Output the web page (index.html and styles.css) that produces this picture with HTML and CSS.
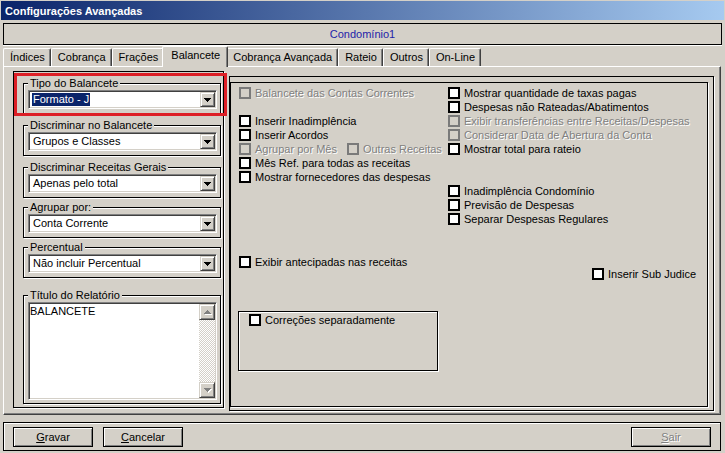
FILE: index.html
```html
<!DOCTYPE html>
<html lang="pt-BR">
<head>
<meta charset="utf-8">
<title>Configurações Avançadas</title>
<link rel="stylesheet" href="styles.css">
</head>
<body>
<div class="window">
  <div class="titlebar">Configurações Avançadas</div>
  <div class="condo">Condomínio1</div>
  <div class="tabs">
    <div class="tab">Índices</div>
    <div class="tab">Cobrança</div>
    <div class="tab">Frações</div>
    <div class="tab active">Balancete</div>
    <div class="tab">Cobrança Avançada</div>
    <div class="tab">Rateio</div>
    <div class="tab">Outros</div>
    <div class="tab">On-Line</div>
  </div>
  <div class="tabpanel">
    <div class="leftframe">
      <fieldset class="grp g1">
        <legend>Tipo do Balancete</legend>
        <div class="combo"><span class="val"><span class="sel">Formato - J</span></span><span class="drop"><svg width="7" height="4" viewBox="0 0 7 4"><path d="M0 0h7v1H0zM1 1h5v1H1zM2 2h3v1H2zM3 3h1v1H3z"/></svg></span></div>
      </fieldset>
      <fieldset class="grp g2">
        <legend>Discriminar no Balancete</legend>
        <div class="combo"><span class="val">Grupos e Classes</span><span class="drop"><svg width="7" height="4" viewBox="0 0 7 4"><path d="M0 0h7v1H0zM1 1h5v1H1zM2 2h3v1H2zM3 3h1v1H3z"/></svg></span></div>
      </fieldset>
      <fieldset class="grp g3">
        <legend>Discriminar Receitas Gerais</legend>
        <div class="combo"><span class="val">Apenas pelo total</span><span class="drop"><svg width="7" height="4" viewBox="0 0 7 4"><path d="M0 0h7v1H0zM1 1h5v1H1zM2 2h3v1H2zM3 3h1v1H3z"/></svg></span></div>
      </fieldset>
      <fieldset class="grp g4">
        <legend>Agrupar por:</legend>
        <div class="combo"><span class="val">Conta Corrente</span><span class="drop"><svg width="7" height="4" viewBox="0 0 7 4"><path d="M0 0h7v1H0zM1 1h5v1H1zM2 2h3v1H2zM3 3h1v1H3z"/></svg></span></div>
      </fieldset>
      <fieldset class="grp g5">
        <legend>Percentual</legend>
        <div class="combo"><span class="val">Não incluir Percentual</span><span class="drop"><svg width="7" height="4" viewBox="0 0 7 4"><path d="M0 0h7v1H0zM1 1h5v1H1zM2 2h3v1H2zM3 3h1v1H3z"/></svg></span></div>
      </fieldset>
      <fieldset class="grp g6">
        <legend>Título do Relatório</legend>
        <div class="memo">
          <div class="memotext">BALANCETE</div>
          <div class="vscroll">
            <span class="sbtn"><svg class="darr" width="7" height="4" viewBox="0 0 7 4"><path d="M3 0h1v1H3zM2 1h3v1H2zM1 2h5v1H1zM0 3h7v1H0z"/></svg></span>
            <span class="strack"></span>
            <span class="sbtn"><svg class="darr" width="7" height="4" viewBox="0 0 7 4"><path d="M0 0h7v1H0zM1 1h5v1H1zM2 2h3v1H2zM3 3h1v1H3z"/></svg></span>
          </div>
        </div>
      </fieldset>
    </div>
    <div class="rframe">
      <div class="rpanel">
        <div class="cols">
          <div class="col colA">
            <div class="row dis"><span class="box"></span><span class="lbl">Balancete das Contas Correntes</span></div>
            <div class="blank"></div>
            <div class="row"><span class="box"></span><span class="lbl">Inserir Inadimplência</span></div>
            <div class="row"><span class="box"></span><span class="lbl">Inserir Acordos</span></div>
            <div class="row dis"><span class="box"></span><span class="lbl">Agrupar por Mês</span><span class="box second"></span><span class="lbl">Outras Receitas</span></div>
            <div class="row"><span class="box"></span><span class="lbl">Mês Ref. para todas as receitas</span></div>
            <div class="row"><span class="box"></span><span class="lbl">Mostrar fornecedores das despesas</span></div>
          </div>
          <div class="col colB">
            <div class="row"><span class="box"></span><span class="lbl">Mostrar quantidade de taxas pagas</span></div>
            <div class="row"><span class="box"></span><span class="lbl">Despesas não Rateadas/Abatimentos</span></div>
            <div class="row dis"><span class="box"></span><span class="lbl">Exibir transferências entre Receitas/Despesas</span></div>
            <div class="row dis"><span class="box"></span><span class="lbl">Considerar Data de Abertura da Conta</span></div>
            <div class="row"><span class="box"></span><span class="lbl">Mostrar total para rateio</span></div>
            <div class="blank"></div>
            <div class="blank"></div>
            <div class="row"><span class="box"></span><span class="lbl">Inadimplência Condomínio</span></div>
            <div class="row"><span class="box"></span><span class="lbl">Previsão de Despesas</span></div>
            <div class="row"><span class="box"></span><span class="lbl">Separar Despesas Regulares</span></div>
          </div>
        </div>
        <div class="midrow">
          <div class="row"><span class="box"></span><span class="lbl">Exibir antecipadas nas receitas</span></div>
          <div class="row subjudice"><span class="box"></span><span class="lbl">Inserir Sub Judice</span></div>
        </div>
        <div class="correcoes">
          <div class="row"><span class="box"></span><span class="lbl">Correções separadamente</span></div>
        </div>
      </div>
    </div>
  </div>
  <div class="buttonbar">
    <div class="btn"><u>G</u>ravar</div>
    <div class="btn"><u>C</u>ancelar</div>
    <div class="btn disabled"><u>S</u>air</div>
  </div>
</div>
<div class="redmark"></div>
</body>
</html>
```
FILE: styles.css
```css
* { box-sizing: border-box; }
html, body { margin: 0; padding: 0; }
body {
  width: 725px;
  height: 453px;
  background: #d4d0c8;
  font-family: "Liberation Sans", Arial, sans-serif;
  font-size: 11px;
  color: #000;
  overflow: hidden;
  position: relative;
}
.window {
  width: 725px;
  height: 453px;
  padding: 1px 3px 0;
  display: flex;
  flex-direction: column;
}
.titlebar {
  margin: 0 -2px;
  height: 19px;
  background: linear-gradient(to right, #0a246a, #a6caf0);
  color: #fff;
  font-weight: bold;
  line-height: 17px;
  padding: 2px 0 0 4px;
  white-space: nowrap;
}
.condo {
  margin-top: 3px;
  height: 22px;
  border: 1px solid #000;
  box-shadow: 0 1px 0 #fff;
  text-align: center;
  line-height: 20px;
  color: #1e22a8;
}
.tabs {
  margin-top: 1px;
  height: 20px;
  display: flex;
  align-items: flex-end;
  position: relative;
  z-index: 2;
}
.tab {
  height: 18px;
  padding: 0 5px 0 6px;
  border-top: 1px solid #fff;
  border-left: 1px solid #fff;
  border-right: 1px solid #404040;
  box-shadow: inset -1px 0 #808080;
  border-radius: 2px 2px 0 0;
  line-height: 16px;
  white-space: nowrap;
  background: #d4d0c8;
}
.tab.active {
  height: 21px;
  margin: 0 -2px -1px;
  padding: 0 7px 0 8px;
  line-height: 16px;
  position: relative;
  z-index: 3;
}
.tabpanel {
  width: 718px;
  height: 349px;
  border: 1px solid;
  border-color: #fff #404040 #404040 #fff;
  box-shadow: inset -1px -1px #808080;
  display: flex;
  align-items: flex-start;
  padding-left: 9px;
  position: relative;
  z-index: 1;
}
.leftframe {
  margin-top: 4px;
  width: 211px;
  height: 337px;
  border: 1px solid #000;
  box-shadow: 1px 1px 0 #fff;
  padding: 5px 2px 0 9px;
  display: flex;
  flex-direction: column;
}
fieldset.grp {
  margin: 0;
  padding: 0 3px 4px 4px;
  border: 1px solid #000;
  box-shadow: 1px 1px 0 #fff, inset 1px 1px 0 #fff;
  min-width: 0;
  flex: none;
}
fieldset.grp legend {
  padding: 0 2px;
  line-height: 13px;
  font-size: 11px;
  background: #d4d0c8;
  white-space: nowrap;
}
fieldset.g2, fieldset.g3 { margin-top: 5px; }
fieldset.g4, fieldset.g5 { margin-top: 3px; }
fieldset.g6 { margin-top: 11px; padding-bottom: 3px; }
.combo {
  height: 19px;
  display: flex;
  background: #fff;
  border: 1px solid;
  border-color: #808080 #fff #fff #808080;
  box-shadow: inset 1px 1px #404040, inset -1px -1px #d4d0c8;
}
.val {
  flex: 1;
  padding-left: 4px;
  line-height: 17px;
  white-space: nowrap;
  overflow: hidden;
}
.val .sel {
  display: inline-block;
  margin: 2px 0 0 -1px;
  padding: 0 1px;
  line-height: 13px;
  background: #0a246a;
  color: #fff;
  vertical-align: top;
}
.drop, .sbtn {
  width: 15px;
  height: 15px;
  margin: 1px 1px 1px 0;
  background: #d4d0c8;
  border: 1px solid;
  border-color: #d4d0c8 #404040 #404040 #d4d0c8;
  box-shadow: inset 1px 1px #fff, inset -1px -1px #808080;
  display: flex;
  align-items: center;
  justify-content: center;
  flex: none;
}
.drop svg { fill: #000; display: block; }
.memo {
  height: 98px;
  display: flex;
  background: #fff;
  border: 1px solid;
  border-color: #808080 #fff #fff #808080;
  box-shadow: inset 1px 1px #404040, inset -1px -1px #d4d0c8;
}
.memotext {
  flex: 1;
  padding: 2px 0 0 1px;
  line-height: 13px;
}
.vscroll {
  width: 16px;
  margin: 1px 1px 1px 0;
  display: flex;
  flex-direction: column;
}
.vscroll .sbtn {
  width: 16px;
  height: 16px;
  margin: 0;
}
.darr { fill: #808080; display: block; filter: drop-shadow(1px 1px 0 #fff); }
.strack {
  flex: 1;
  background-image: repeating-conic-gradient(#fff 0 25%, #d4d0c8 0 50%);
  background-size: 2px 2px;
}
.rframe {
  margin: 9px 0 0 5px;
  width: 485px;
  height: 335px;
  border: 1px solid #000;
  box-shadow: 1px 1px 0 #fff;
  padding: 5px 5px 3px 0;
  display: flex;
}
.rpanel {
  flex: 1;
  border: 1px solid #000;
  box-shadow: 1px 1px 0 #fff;
  display: flex;
  flex-direction: column;
  padding: 3px 0 0 8px;
}
.cols { display: flex; align-items: flex-start; }
.colA { width: 209px; }
.row {
  height: 14px;
  display: flex;
  align-items: center;
  white-space: nowrap;
}
.blank { height: 14px; }
.box {
  width: 12px;
  height: 12px;
  border: 2px solid #000;
  background: #fff;
  flex: none;
}
.lbl { margin-left: 4px; }
.box.second { margin-left: 10px; }
.row.dis .box { border-color: #7a7a7a; background: #d4d0c8; }
.row.dis .lbl { color: #808080; text-shadow: 1px 1px 0 #fff; }
.midrow {
  display: flex;
  align-items: flex-start;
  margin-top: 29px;
}
.subjudice {
  margin: 12px 11px 0 auto;
}
.correcoes {
  margin: 30px 0 0 -1px;
  width: 200px;
  height: 60px;
  border: 1px solid #000;
  box-shadow: inset 1px 1px #fff, 1px 1px 0 #fff;
  padding: 1px 0 0 10px;
}
.buttonbar {
  margin-top: 7px;
  width: 718px;
  height: 29px;
  border: 1px solid #000;
  box-shadow: inset 1px 1px #fff;
  display: flex;
  align-items: flex-start;
  padding: 4px 9px 0;
  gap: 10px;
}
.btn {
  width: 80px;
  height: 20px;
  border: 1px solid #000;
  box-shadow: inset 1px 1px #fff, inset -1px -1px #808080;
  text-align: center;
  line-height: 18px;
}
.btn.disabled {
  margin-left: auto;
  color: #808080;
  text-shadow: 1px 1px 0 #fff;
}
.redmark {
  position: absolute;
  left: 14px;
  top: 73px;
  width: 213px;
  height: 43px;
  border: 3px solid #dd1f26;
  pointer-events: none;
  z-index: 5;
}
```
